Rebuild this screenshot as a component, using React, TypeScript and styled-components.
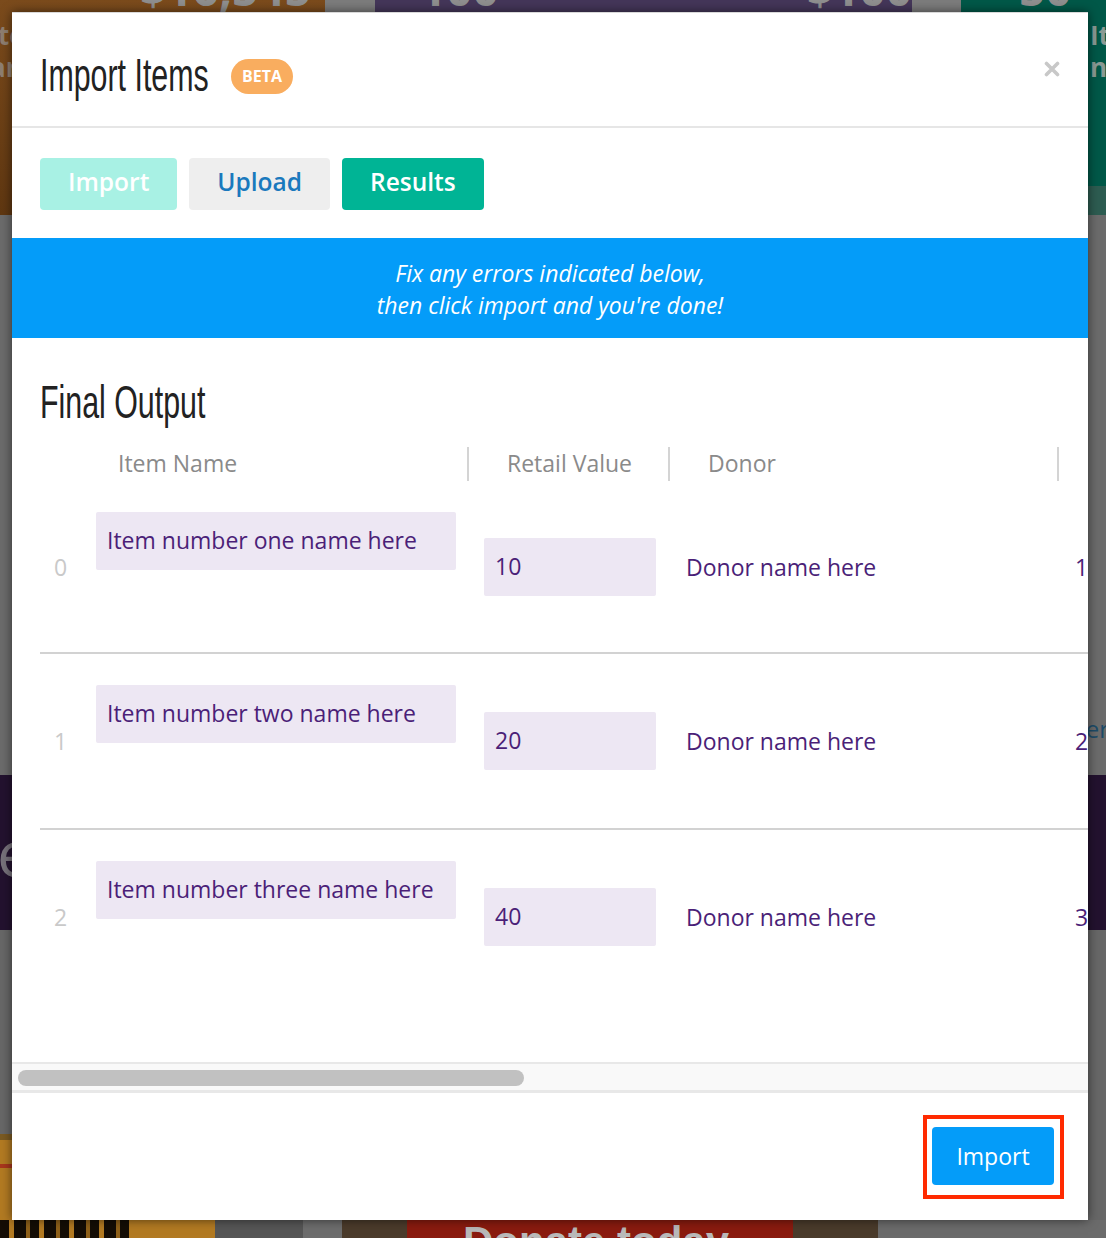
import React from "react";
import styled, { createGlobalStyle } from "styled-components";

const GlobalStyle = createGlobalStyle`
  html, body { margin: 0; padding: 0; }
  body {
    width: 1106px;
    height: 1238px;
    overflow: hidden;
    background: #6a6a6a;
    font-family: "Open Sans", "Liberation Sans", sans-serif;
  }
  * { box-sizing: border-box; }
`;

const Page = styled.div`
  position: relative;
  width: 1106px;
  height: 1238px;
  overflow: hidden;
  background: #6a6a6a;
`;

/* ---------- dimmed page behind the modal ---------- */
const Backdrop = styled.div`
  display: flex;
  flex-direction: column;
  width: 1106px;
`;

const Band = styled.div<{ $h: number; $bg?: string; $justify?: string; $align?: string; $pb?: number }>`
  display: flex;
  height: ${(p) => p.$h}px;
  flex: 0 0 ${(p) => p.$h}px;
  background: ${(p) => p.$bg ?? "transparent"};
  justify-content: ${(p) => p.$justify ?? "flex-start"};
  align-items: ${(p) => p.$align ?? "stretch"};
  padding-bottom: ${(p) => p.$pb ?? 0}px;
  overflow: hidden;
`;

const Tile = styled.div<{ $w?: number; $bg: string; $row?: boolean; $justify?: string }>`
  flex: ${(p) => (p.$w ? `0 0 ${p.$w}px` : "1 1 auto")};
  background: ${(p) => p.$bg};
  display: flex;
  flex-direction: ${(p) => (p.$row ? "row" : "column")};
  justify-content: ${(p) => p.$justify ?? "flex-start"};
  overflow: hidden;
`;

const BigNum = styled.div<{ $ml?: number }>`
  margin-top: -34px;
  margin-left: ${(p) => p.$ml ?? 0}px;
  font-family: "Open Sans", sans-serif;
  font-weight: 700;
  font-size: 46px;
  line-height: 44px;
  color: #8f8f8f;
  white-space: nowrap;
`;

const SideText = styled.div<{ $ml: number; $color: string }>`
  margin-left: ${(p) => p.$ml}px;
  margin-top: 9px;
  font-family: "Open Sans", sans-serif;
  font-weight: 700;
  font-size: 26px;
  line-height: 32px;
  color: ${(p) => p.$color};
  white-space: nowrap;
`;

const GhostWord = styled.div<{ $size: number; $color: string; $ml?: number; $mr?: number; $weight?: number }>`
  font-family: "Open Sans", sans-serif;
  font-size: ${(p) => p.$size}px;
  font-weight: ${(p) => p.$weight ?? 400};
  line-height: 1;
  color: ${(p) => p.$color};
  margin-left: ${(p) => p.$ml ?? 0}px;
  margin-right: ${(p) => p.$mr ?? 0}px;
  white-space: nowrap;
`;

const Ticket = styled.div`
  margin-top: auto;
  height: 86px;
  background: linear-gradient(180deg, #7a5a22 0 6px, #b27a22 6px 30px, #a8361c 30px 34px, #b27a22 34px);
`;

const DonateText = styled.div`
  padding-left: 56px;
  margin-top: 1px;
  font-family: "Liberation Sans", sans-serif;
  font-weight: 700;
  font-size: 42px;
  line-height: 1;
  color: #b9b9b9;
  white-space: nowrap;
`;

/* ---------- modal ---------- */
const Modal = styled.div`
  position: absolute;
  left: 12px;
  top: 12px;
  width: 1076px;
  height: 1208px;
  background: #ffffff;
  border-top: 1px solid #d9d9d9;
  box-shadow: 0 0 10px rgba(0, 0, 0, 0.55);
  display: flex;
  flex-direction: column;
  overflow: hidden;
`;

const Header = styled.div`
  flex: 0 0 115px;
  display: flex;
  align-items: center;
  padding: 0 28px;
  border-bottom: 2px solid #e6e6e6;
`;

/* condensed light display face (narrowed Liberation Sans) */
const Title = styled.h2<{ $mt?: number; $mb?: number; $ml?: number; $visualW: number }>`
  margin: ${(p) => p.$mt ?? 0}px 0 ${(p) => p.$mb ?? 0}px ${(p) => p.$ml ?? 0}px;
  width: ${(p) => p.$visualW}px;
  font-family: "Liberation Sans", "Arial", sans-serif;
  font-weight: 400;
  font-size: 46px;
  line-height: 48px;
  color: #222222;
  white-space: nowrap;
  transform: scaleX(0.66);
  transform-origin: left center;
`;

const Badge = styled.span`
  margin: 13px 0 0 19px;
  height: 35px;
  padding: 0 11px;
  border-radius: 18px;
  background: #f9ad5f;
  color: #ffffff;
  font-family: "Open Sans", sans-serif;
  font-weight: 700;
  font-size: 16px;
  display: inline-flex;
  align-items: center;
`;

const CloseButton = styled.button`
  margin: -2px 0 0 auto;
  padding: 0;
  border: 0;
  background: none;
  width: 16px;
  height: 16px;
  display: flex;
`;

const TabBar = styled.div`
  flex: 0 0 110px;
  display: flex;
  gap: 12px;
  padding: 30px 28px 28px;
`;

const Tab = styled.button<{ $bg: string; $fg: string }>`
  height: 52px;
  padding: 0 28px 4px;
  border: 0;
  border-radius: 4px;
  background: ${(p) => p.$bg};
  color: ${(p) => p.$fg};
  font-family: "Open Sans", sans-serif;
  font-weight: 600;
  font-size: 24.5px;
  line-height: 44px;
`;

const Banner = styled.div`
  flex: 0 0 100px;
  background: #049cf9;
  display: flex;
  flex-direction: column;
  align-items: center;
  justify-content: center;
  padding-top: 2px;
  color: #ffffff;
  font-family: "Open Sans", sans-serif;
  font-style: italic;
  font-size: 23px;
  line-height: 32px;
`;

const Content = styled.div`
  flex: 1 1 auto;
  display: flex;
  flex-direction: column;
  overflow: hidden;
`;

const TableViewport = styled.div`
  padding-left: 28px;
  overflow: hidden;
`;

const COLS = "56px 373px 201px 389px 260px";

const HeadRow = styled.div`
  display: grid;
  grid-template-columns: ${COLS};
  width: 1279px;
  height: 34px;
`;

const HeadCell = styled.div<{ $pl: number; $sep?: boolean }>`
  display: flex;
  align-items: center;
  padding-left: ${(p) => p.$pl}px;
  padding-bottom: 2px;
  border-right: ${(p) => (p.$sep ? "2px solid #d4d4d4" : "0")};
  font-family: "Open Sans", sans-serif;
  font-size: 23px;
  color: #8a8a8a;
  white-space: nowrap;
`;

const Row = styled.div<{ $h: number; $last?: boolean }>`
  display: grid;
  grid-template-columns: ${COLS};
  align-items: center;
  width: 1279px;
  height: ${(p) => p.$h}px;
  border-bottom: ${(p) => (p.$last ? "0" : "2px solid #d2d2d2")};
`;

const IndexCell = styled.div`
  padding-left: 14px;
  font-family: "Open Sans", sans-serif;
  font-size: 23px;
  color: #c9c9c9;
`;

const ItemCell = styled.div`
  align-self: start;
  padding-top: 31px;
`;

const Cell = styled.div<{ $pl: number }>`
  padding-left: ${(p) => p.$pl}px;
  font-family: "Open Sans", sans-serif;
  font-size: 23px;
  color: #4b1f78;
  white-space: nowrap;
`;

const Field = styled.div<{ $w: number }>`
  width: ${(p) => p.$w}px;
  height: 58px;
  padding-left: 11px;
  border-radius: 2px;
  background: #ede7f3;
  font-family: "Open Sans", sans-serif;
  font-size: 23px;
  line-height: 57px;
  color: #4b1f78;
  white-space: nowrap;
`;

const ScrollTrack = styled.div`
  flex: 0 0 31px;
  border-top: 2px solid #e8e8e8;
  border-bottom: 3px solid #e8e8e8;
  background: #f9f9f9;
  padding: 6px 0 0 6px;
`;

const ScrollThumb = styled.div`
  width: 506px;
  height: 16px;
  border-radius: 8px;
  background: #c1c1c1;
`;

const Footer = styled.div`
  flex: 0 0 127px;
  display: flex;
  justify-content: flex-end;
  align-items: center;
  padding-right: 24px;
`;

const Highlight = styled.div`
  border: 4px solid #ff2a00;
  padding: 8px 6px 10px 5px;
  display: flex;
`;

const PrimaryButton = styled.button`
  width: 122px;
  height: 58px;
  border: 0;
  border-radius: 4px;
  background: #049cf9;
  color: #ffffff;
  font-family: "Open Sans", sans-serif;
  font-size: 23px;
  padding: 0;
`;

const rows = [
  { name: "Item number one name here", value: "10", donor: "Donor name here", next: "1", h: 173 },
  { name: "Item number two name here", value: "20", donor: "Donor name here", next: "2", h: 176 },
  { name: "Item number three name here", value: "40", donor: "Donor name here", next: "3", h: 174 },
];

export default function App() {
  return (
    <>
      <GlobalStyle />
      <Page>
        <Backdrop>
          <Band $h={215}>
            <Tile $w={325} $bg="linear-gradient(180deg, #7b4b1c 0%, #6c4016 55%, #5f3711 100%)">
              <BigNum $ml={140}>$16,545</BigNum>
              <SideText $ml={-10} $color="#8e7e70">
                ite
                <br />
                ar
              </SideText>
            </Tile>
            <Tile $w={50} $bg="#7c7c7c" />
            <Tile $w={537} $bg="#443659" $row $justify="space-between">
              <BigNum $ml={45}>100</BigNum>
              <BigNum>$100</BigNum>
            </Tile>
            <Tile $w={49} $bg="#7c7c7c" />
            <Tile $bg="linear-gradient(180deg, #005848 0 186px, #2d5c51 186px)">
              <BigNum $ml={58}>50</BigNum>
              <SideText $ml={129} $color="#8a9a94">
                It
                <br />
                na
              </SideText>
            </Tile>
          </Band>
          <Band $h={560} $bg="#6b6b6b" $justify="flex-end" $align="flex-end" $pb={34}>
            <GhostWord $size={24} $color="#1d4c69" $mr={-3}>
              Enter
            </GhostWord>
          </Band>
          <Band $h={155} $bg="#23122f" $align="center">
            <GhostWord $size={64} $color="#77727b" $ml={-38}>
              Se
            </GhostWord>
          </Band>
          <Band $h={290} $bg="#676767">
            <Tile $w={120} $bg="transparent">
              <Ticket />
            </Tile>
          </Band>
          <Band $h={40}>
            <Tile $w={130} $bg="repeating-linear-gradient(90deg, #140d05 0 9px, #b27a22 9px 14px, #140d05 14px 26px, #8f611a 26px 30px)" />
            <Tile $w={85} $bg="#b27a22" />
            <Tile $w={88} $bg="#565656" />
            <Tile $w={39} $bg="#6d6d6d" />
            <Tile $w={65} $bg="#4b3b2b" />
            <Tile $w={386} $bg="#8a1b0f">
              <DonateText>Donate today</DonateText>
            </Tile>
            <Tile $w={85} $bg="#4a3b2b" />
            <Tile $bg="#6b6b6b" />
          </Band>
        </Backdrop>

        <Modal>
          <Header>
            <Title $mt={11} $visualW={172}>Import Items</Title>
            <Badge>BETA</Badge>
            <CloseButton aria-label="Close">
              <svg width="16" height="16" viewBox="0 0 16 16">
                <path d="M2.5 2.5 L13.5 13.5 M13.5 2.5 L2.5 13.5" stroke="#c8c8c8" strokeWidth="3.6" strokeLinecap="round" />
              </svg>
            </CloseButton>
          </Header>

          <TabBar>
            <Tab $bg="#a8f1e4" $fg="#ffffff">Import</Tab>
            <Tab $bg="#eeeeee" $fg="#1a79bd">Upload</Tab>
            <Tab $bg="#00b495" $fg="#ffffff">Results</Tab>
          </TabBar>

          <Banner>
            <span>Fix any errors indicated below,</span>
            <span>then click import and you're done!</span>
          </Banner>

          <Content>
            <Title as="h3" $mt={40} $mb={21} $ml={28} $visualW={165}>
              Final Output
            </Title>
            <TableViewport>
              <HeadRow>
                <HeadCell $pl={0} />
                <HeadCell $pl={22} $sep>Item Name</HeadCell>
                <HeadCell $pl={38} $sep>Retail Value</HeadCell>
                <HeadCell $pl={38} $sep>Donor</HeadCell>
                <HeadCell $pl={38}>Quantity</HeadCell>
              </HeadRow>
              {rows.map((r, i) => (
                <Row key={i} $h={r.h} $last={i === rows.length - 1}>
                  <IndexCell>{i}</IndexCell>
                  <ItemCell>
                    <Field $w={360}>{r.name}</Field>
                  </ItemCell>
                  <Cell $pl={15}>
                    <Field $w={172}>{r.value}</Field>
                  </Cell>
                  <Cell $pl={16}>{r.donor}</Cell>
                  <Cell $pl={16}>{r.next}</Cell>
                </Row>
              ))}
            </TableViewport>
          </Content>

          <ScrollTrack>
            <ScrollThumb />
          </ScrollTrack>

          <Footer>
            <Highlight>
              <PrimaryButton>Import</PrimaryButton>
            </Highlight>
          </Footer>
        </Modal>
      </Page>
    </>
  );
}
